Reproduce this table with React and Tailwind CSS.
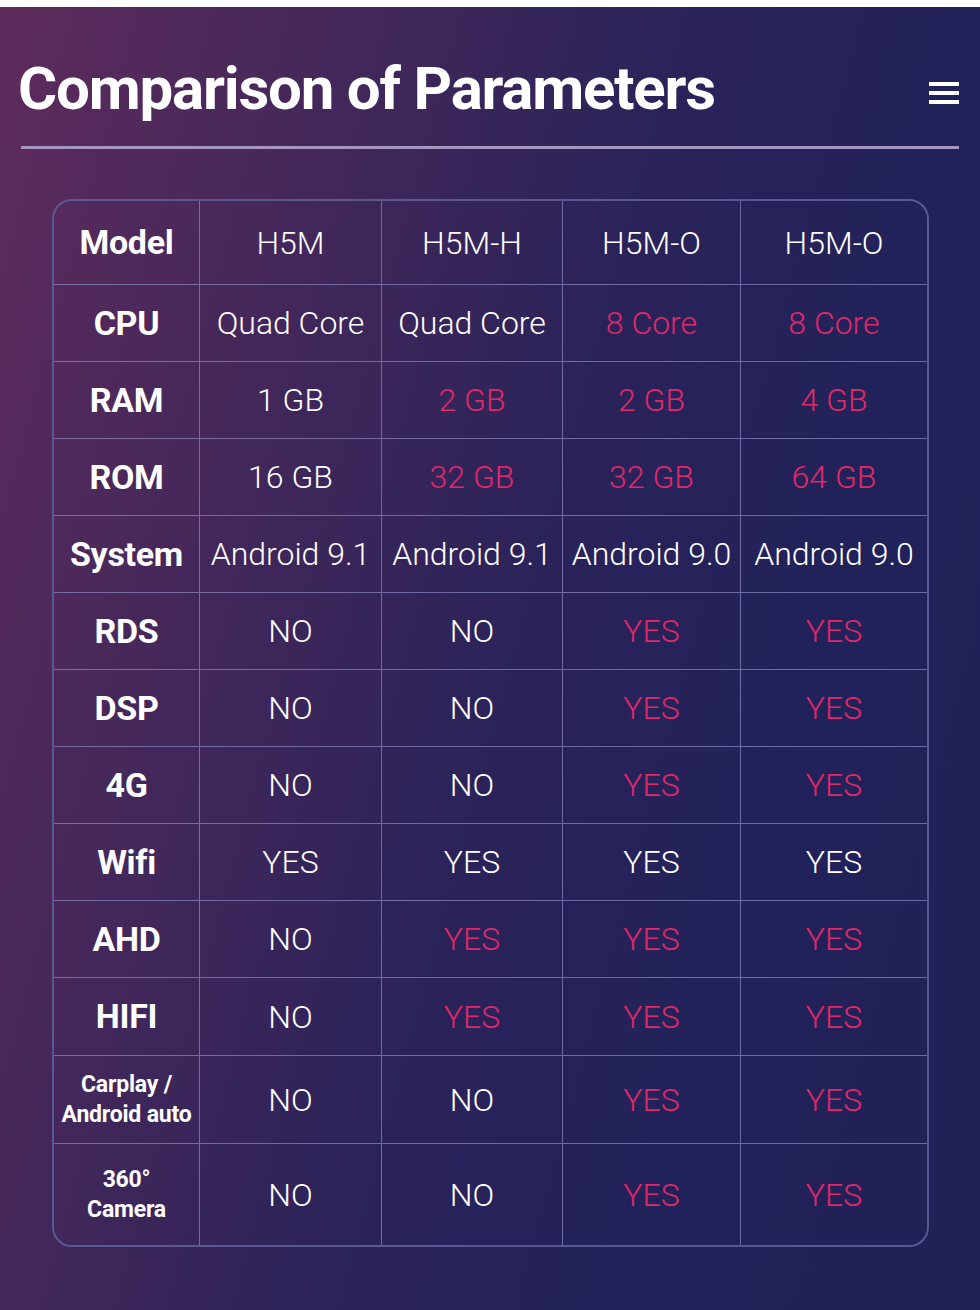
const rows = [
  { label: 'CPU', h: 'h-[77px]', cells: [['Quad Core', 0], ['Quad Core', 0], ['8 Core', 1], ['8 Core', 1]] },
  { label: 'RAM', h: 'h-[77px]', cells: [['1 GB', 0], ['2 GB', 1], ['2 GB', 1], ['4 GB', 1]] },
  { label: 'ROM', h: 'h-[77px]', cells: [['16 GB', 0], ['32 GB', 1], ['32 GB', 1], ['64 GB', 1]] },
  { label: 'System', h: 'h-[77px]', cells: [['Android 9.1', 0], ['Android 9.1', 0], ['Android 9.0', 0], ['Android 9.0', 0]] },
  { label: 'RDS', h: 'h-[77px]', cells: [['NO', 0], ['NO', 0], ['YES', 1], ['YES', 1]] },
  { label: 'DSP', h: 'h-[77px]', cells: [['NO', 0], ['NO', 0], ['YES', 1], ['YES', 1]] },
  { label: '4G', h: 'h-[77px]', cells: [['NO', 0], ['NO', 0], ['YES', 1], ['YES', 1]] },
  { label: 'Wifi', h: 'h-[77px]', cells: [['YES', 0], ['YES', 0], ['YES', 0], ['YES', 0]] },
  { label: 'AHD', h: 'h-[77px]', cells: [['NO', 0], ['YES', 1], ['YES', 1], ['YES', 1]] },
  { label: 'HIFI', h: 'h-[78px]', cells: [['NO', 0], ['YES', 1], ['YES', 1], ['YES', 1]] },
  { label: ['Carplay /', 'Android auto'], h: 'h-[88px]', cells: [['NO', 0], ['NO', 0], ['YES', 1], ['YES', 1]] },
  { label: ['360°', 'Camera'], h: 'h-[101px]', cells: [['NO', 0], ['NO', 0], ['YES', 1], ['YES', 1]], last: true },
];

const models = ['H5M', 'H5M-H', 'H5M-O', 'H5M-O'];

const cellBase = 'flex items-center justify-center text-center border-[#8d89c4]/70';

const Label = ({ label }) =>
  Array.isArray(label) ? (
    <span className="text-[23px] leading-[30px] font-bold tracking-[-0.2px] whitespace-nowrap">
      {label[0]}
      <br />
      {label[1]}
    </span>
  ) : (
    <span className="text-[34px] font-bold tracking-[-0.3px]">{label}</span>
  );

const App = () => {
  return (
    <div className="w-[980px] h-[1310px] bg-white pt-[7px] font-['Roboto',sans-serif]">
      <div className="h-[1303px] bg-[#21225a] bg-[linear-gradient(105deg,#5e2b5c_0%,#42275a_28%,#2a2359_52%,#21225a_75%,#212156_100%)] text-white">
        {/* Header */}
        <div className="flex items-center justify-between pl-[18px] pr-[21px] pt-[48px]">
          <h1 className="text-[60px] leading-[68px] font-bold tracking-[-1.2px]">Comparison of Parameters</h1>
          <div className="flex flex-col gap-[5px] mt-[8px]">
            <span className="block w-[30px] h-[4px] bg-white" />
            <span className="block w-[30px] h-[4px] bg-white" />
            <span className="block w-[30px] h-[4px] bg-white" />
          </div>
        </div>
        <div className="mx-[21px] mt-[23px] h-[3px] bg-[#a596bf]" />

        {/* Table */}
        <div className="ml-[52px] mt-[50px] w-[877px] rounded-[20px] border-2 border-[#5a5892] overflow-hidden">
          <div className="grid grid-cols-[146px_182px_181px_178px_186px]">
            <div className={`${cellBase} h-[84px] border-r border-b`}>
              <Label label="Model" />
            </div>
            {models.map((m, i) => (
              <div key={i} className={`${cellBase} h-[84px] border-b ${i < 3 ? 'border-r' : ''} text-[32px] font-light`}>
                {m}
              </div>
            ))}
            {rows.map((r, ri) => (
              <div key={ri} className="contents">
                <div className={`${cellBase} ${r.h} border-r ${r.last ? '' : 'border-b'}`}>
                  <Label label={r.label} />
                </div>
                {r.cells.map(([t, red], ci) => (
                  <div
                    key={ci}
                    className={`${cellBase} ${r.h} ${ci < 3 ? 'border-r' : ''} ${r.last ? '' : 'border-b'} text-[32px] font-light whitespace-nowrap ${red ? 'text-[#e0286a]' : 'text-white'}`}
                  >
                    {t}
                  </div>
                ))}
              </div>
            ))}
          </div>
        </div>
      </div>
    </div>
  );
};

export default App;
